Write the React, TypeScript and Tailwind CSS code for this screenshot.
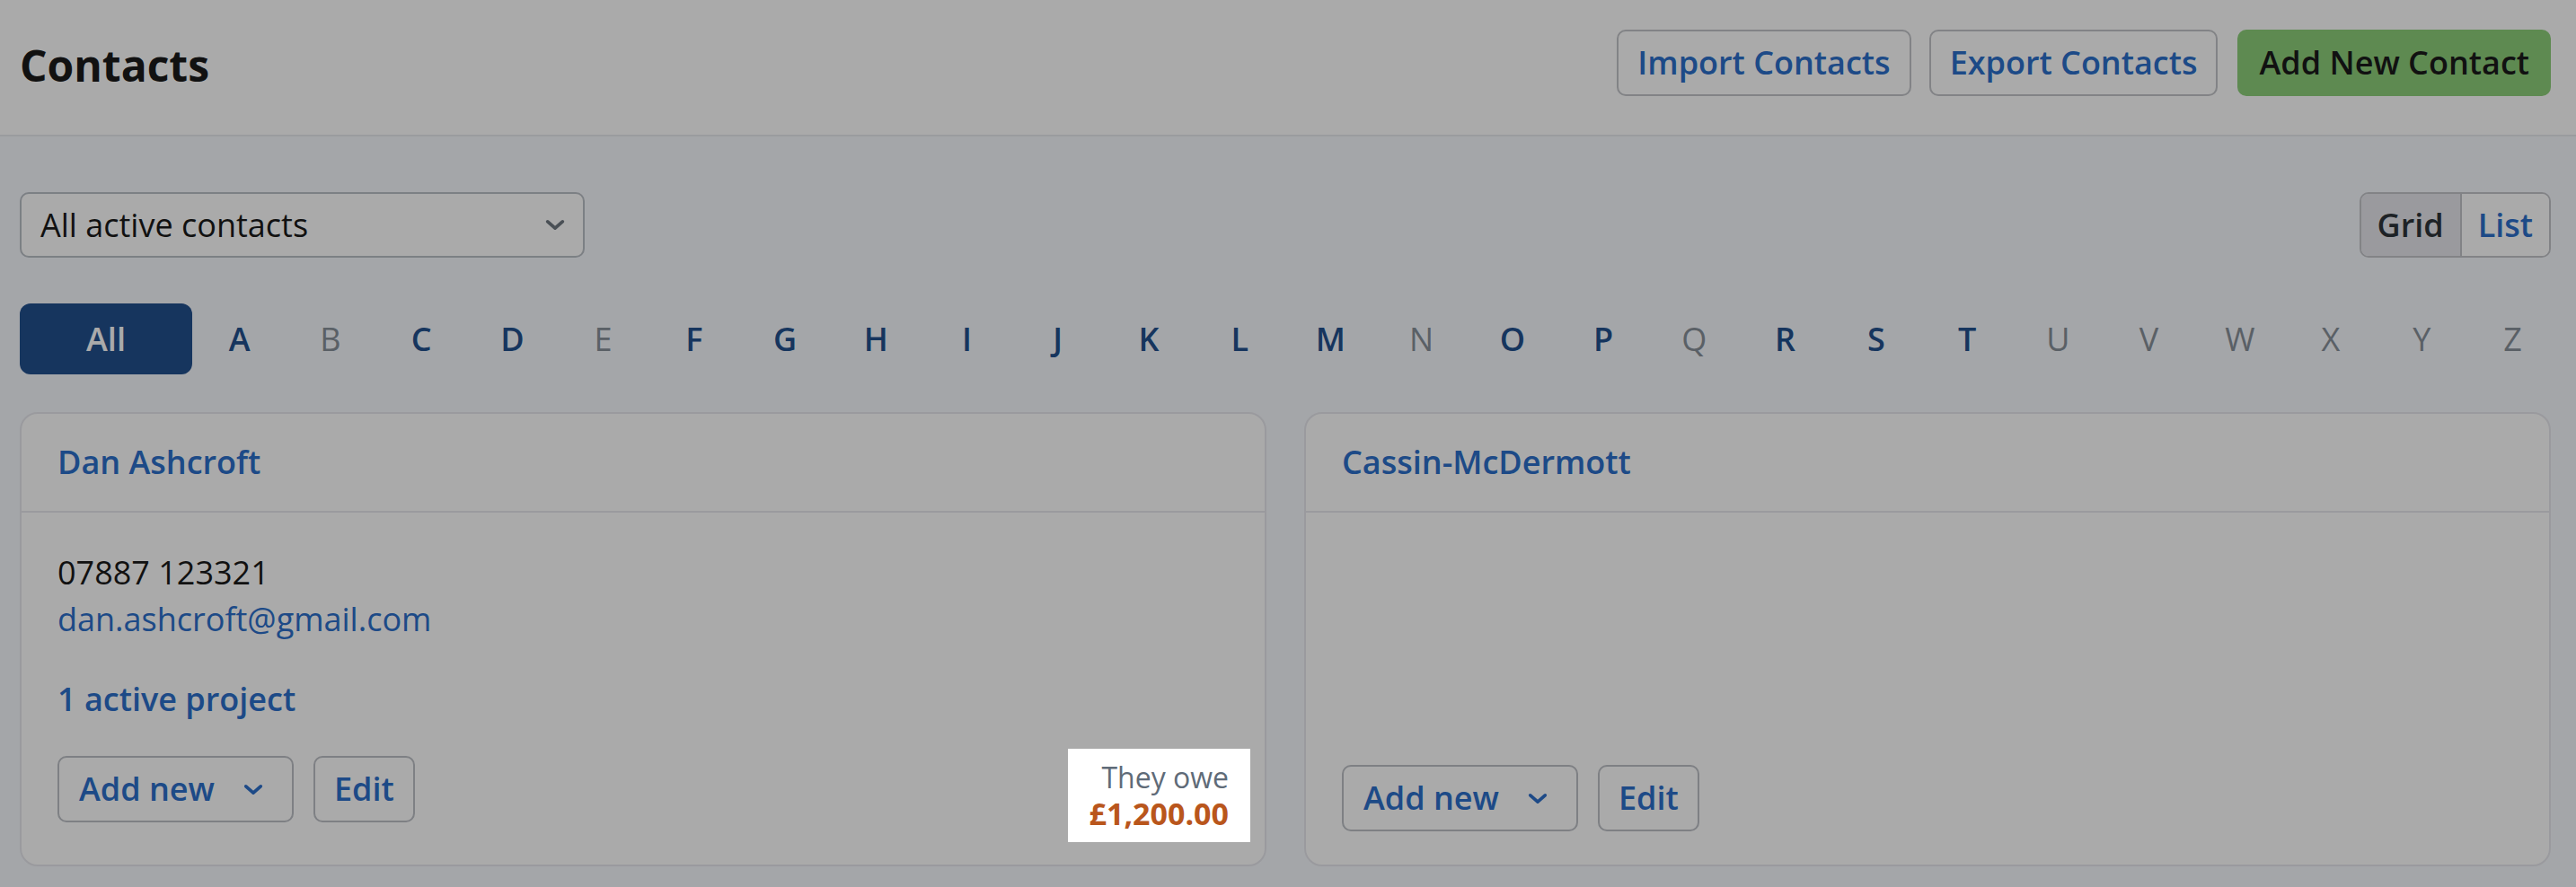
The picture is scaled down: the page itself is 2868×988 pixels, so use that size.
import React from 'react';

const LETTERS = 'ABCDEFGHIJKLMNOPQRSTUVWXYZ'.split('');
const ACTIVE = new Set('ACDFGHIJKLMOPRST'.split(''));

function Chevron({ className }: { className?: string }) {
  return (
    <svg viewBox="0 0 24 14" className={className} fill="none" stroke="currentColor" strokeWidth={4} strokeLinecap="round" strokeLinejoin="round">
      <path d="M3 3l9 8 9-8" />
    </svg>
  );
}

function Card({ name, children, owe }: { name: string; children?: React.ReactNode; owe?: string }) {
  return (
    <div className="flex flex-col rounded-[20px] border-2 border-[#e7e8ee] bg-white">
      <div className="flex h-[110px] items-center border-b-2 border-[#e7e8ee] px-[40px] text-[36px] font-semibold text-[#2c6fcb]">
        {name}
      </div>
      <div className="flex flex-1 flex-col px-[40px] pt-[41px] pb-[37px]">
        {children}
        <div className="mt-auto flex items-center justify-between">
          <div className="flex gap-[22px]">
            <button className="flex h-[74px] items-center gap-[32px] rounded-[10px] border-2 border-[#bdc0c6] bg-white pl-[22px] pr-[32px] text-[36px] font-semibold text-[#2c6fcb]">
              Add new
              <Chevron className="h-[13px] w-[22px]" />
            </button>
            <button className="h-[74px] rounded-[10px] border-2 border-[#bdc0c6] bg-white px-[21px] text-[36px] font-semibold text-[#2c6fcb]">
              Edit
            </button>
          </div>
          {owe && (
            <div className="relative z-20 -mr-[24px] mt-[2px] -mb-[12px] bg-white px-[24px] py-[12px] text-right">
              <div className="text-[32px] leading-[40px] text-[#5f6b78]">They owe</div>
              <div className="text-[34px] font-bold leading-[40px] text-[#b9561c]">{owe}</div>
            </div>
          )}
        </div>
      </div>
    </div>
  );
}

export default function App() {
  return (
    <div className="relative min-h-screen bg-[#f7f9fe] font-['Open_Sans',sans-serif] text-[#1a1a1a]">
      <header className="flex items-center justify-between border-b-2 border-[#e8eaee] bg-white pl-[22px] pr-[28px] pt-[33px] pb-[43px]">
        <h1 className="mt-[6px] text-[48px] font-bold leading-none">Contacts</h1>
        <div className="flex items-center">
          <button className="h-[74px] rounded-[10px] border-2 border-[#c3c5c9] bg-white px-[21px] text-[36px] font-semibold text-[#2c6fcb]">
            Import Contacts
          </button>
          <button className="ml-[20px] h-[74px] rounded-[10px] border-2 border-[#c3c5c9] bg-white px-[21px] text-[36px] font-semibold text-[#2c6fcb]">
            Export Contacts
          </button>
          <button className="ml-[22px] h-[74px] rounded-[10px] bg-[#8dcf7a] px-[24px] text-[36px] font-semibold text-[#1a1a1a]">
            Add New Contact
          </button>
        </div>
      </header>

      <main className="pl-[22px] pr-[28px] pt-[62px]">
        <div className="flex items-center justify-between">
          <div className="flex h-[73px] w-[629px] items-center justify-between rounded-[10px] border-2 border-[#bbc0c7] bg-white pl-[21px] pr-[20px] text-[36px]">
            <span>All active contacts</span>
            <Chevron className="h-[13px] w-[22px] text-[#6f7881]" />
          </div>
          <div className="flex h-[73px] overflow-hidden rounded-[10px] border-2 border-[#c3c5c9] text-[36px] font-semibold">
            <span className="flex items-center bg-[#e7e8ed] px-[18px] text-[#2e3439]">Grid</span>
            <span className="flex items-center border-l-2 border-[#c3c5c9] bg-white px-[18px] text-[#2c6fcb]">List</span>
          </div>
        </div>

        <div className="mt-[51px] flex items-center">
          <button className="flex h-[79px] w-[192px] items-center justify-center rounded-[12px] bg-[#22508e] text-[36px] font-semibold text-white">
            All
          </button>
          <div className="-mr-[8px] ml-[2px] flex flex-1">
            {LETTERS.map((l) => (
              <span
                key={l}
                className={ACTIVE.has(l) ? 'flex-1 text-center text-[36px] font-semibold text-[#22508e]' : 'flex-1 text-center text-[36px] text-[#879099]'}
              >
                {l}
              </span>
            ))}
          </div>
        </div>

        <div className="mt-[42px] grid grid-cols-2 gap-[42px]">
          <Card name="Dan Ashcroft" owe="£1,200.00">
            <div className="text-[36px] leading-[52px]">07887 123321</div>
            <div className="text-[36px] leading-[52px] text-[#2c6fcb]">dan.ashcroft@gmail.com</div>
            <div className="mt-[37px] mb-[27px] text-[36px] font-semibold leading-[52px] text-[#2c6fcb]">1 active project</div>
          </Card>
          <Card name="Cassin-McDermott" />
        </div>
      </main>

      <div className="pointer-events-none fixed inset-0 z-10 bg-[rgba(0,0,0,0.333)]" />
    </div>
  );
}
